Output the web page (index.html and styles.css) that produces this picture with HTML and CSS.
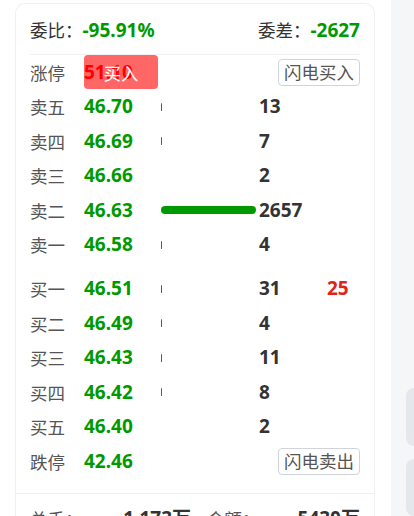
FILE: index.html
```html
<!DOCTYPE html>
<html lang="zh-CN">
<head>
  <meta charset="UTF-8" />
  <meta name="viewport" content="width=device-width, initial-scale=1.0" />
  <title>盘口</title>
  <link rel="stylesheet" href="styles.css">
</head>
<body>
  <div class="main">
    <div class="card">
      <div class="ratio">
        <div><span class="label">委比：</span><b class="num down">-95.91%</b></div>
        <div><span class="label">委差：</span><b class="num down">-2627</b></div>
      </div>

      <div class="book">
        <div class="row">
          <span class="label">涨停</span>
          <span class="num limit-up">51.10<button class="buy">买入</button></span>
          <button class="flash">闪电买入</button>
        </div>
        <div class="row">
          <span class="label">卖五</span><b class="num down">46.70</b>
          <span class="bar-cell"><i class="bar" style="width:1px"></i></span><b class="num vol">13</b>
        </div>
        <div class="row">
          <span class="label">卖四</span><b class="num down">46.69</b>
          <span class="bar-cell"><i class="bar" style="width:1px"></i></span><b class="num vol">7</b>
        </div>
        <div class="row">
          <span class="label">卖三</span><b class="num down">46.66</b>
          <span class="bar-cell"><i class="bar" style="width:0"></i></span><b class="num vol">2</b>
        </div>
        <div class="row">
          <span class="label">卖二</span><b class="num down">46.63</b>
          <span class="bar-cell"><i class="bar" style="width:95px"></i></span><b class="num vol">2657</b>
        </div>
        <div class="row">
          <span class="label">卖一</span><b class="num down">46.58</b>
          <span class="bar-cell"><i class="bar" style="width:1px"></i></span><b class="num vol">4</b>
        </div>

        <div class="gap"></div>

        <div class="row">
          <span class="label">买一</span><b class="num down">46.51</b>
          <span class="bar-cell"><i class="bar" style="width:1px"></i></span><b class="num vol">31</b>
          <b class="num extra">25</b>
        </div>
        <div class="row">
          <span class="label">买二</span><b class="num down">46.49</b>
          <span class="bar-cell"><i class="bar" style="width:1px"></i></span><b class="num vol">4</b>
        </div>
        <div class="row">
          <span class="label">买三</span><b class="num down">46.43</b>
          <span class="bar-cell"><i class="bar" style="width:1px"></i></span><b class="num vol">11</b>
        </div>
        <div class="row">
          <span class="label">买四</span><b class="num down">46.42</b>
          <span class="bar-cell"><i class="bar" style="width:1px"></i></span><b class="num vol">8</b>
        </div>
        <div class="row">
          <span class="label">买五</span><b class="num down">46.40</b>
          <span class="bar-cell"><i class="bar" style="width:0"></i></span><b class="num vol">2</b>
        </div>
        <div class="row">
          <span class="label">跌停</span><b class="num down">42.46</b>
          <button class="flash">闪电卖出</button>
        </div>
      </div>

      <div class="stats">
        <div class="stat"><span class="label">总手：</span><b class="num">1.173万</b></div>
        <div class="stat"><span class="label">金额：</span><b class="num">5430万</b></div>
      </div>
    </div>
  </div>

  <div class="side">
    <div class="block"></div>
    <div class="block"></div>
  </div>
</body>
</html>
```

FILE: styles.css
```css
body {
  margin: 0;
  display: flex;
  height: 516px;
  overflow: hidden;
  font-family: 'Noto Sans', 'Noto Sans CJK SC', sans-serif;
  font-size: 17.5px;
  color: #333;
  background: white;
}
.main {
  flex: 1;
}
.side {
  width: 23px;
  background: #f5f6f8;
  padding-top: 388px;
  display: flex;
  flex-direction: column;
  gap: 13px;
}
.block {
  margin-left: 15px;
  height: 77px;
  border-radius: 8px 0 0 8px;
  background: #e4e7eb;
}
.card {
  margin: 3px 16px 0 15px;
  border: 1px solid #eef0f2;
  border-bottom: none;
  border-radius: 10px 10px 0 0;
  height: 600px;
}
.ratio {
  margin: 0 14px;
  height: 50px;
  display: flex;
  justify-content: space-between;
  align-items: center;
  border-bottom: 1px solid #eef0f2;
}
.label {
  color: #555;
}
.ratio .label {
  color: #333;
}
.num {
  font-size: 19px;
  font-weight: bold;
  line-height: 1;
}
.down {
  color: #009a00;
}
.book {
  padding: 0 14px 14.5px;
}
.gap {
  height: 9.5px;
}
.row {
  height: 34.5px;
  display: grid;
  grid-template-columns: 54px 77px 98px 68px 1fr;
  align-items: center;
}
.limit-up {
  position: relative;
  color: #ff0000;
  align-self: stretch;
  display: flex;
  align-items: center;
}
.buy {
  position: absolute;
  left: 0;
  top: 0;
  width: 74px;
  height: 34px;
  border: none;
  border-radius: 4px;
  background: rgba(255, 0, 0, 0.6);
  color: white;
  font-family: inherit;
  font-size: 17.5px;
  font-weight: normal;
  padding: 0;
}
.flash {
  grid-column: 3 / -1;
  justify-self: end;
  height: 27px;
  padding: 0 5px;
  border: 1px solid #cfd4dc;
  border-radius: 4px;
  background: white;
  color: #555;
  font: inherit;
  line-height: 1;
}
.bar-cell {
  display: flex;
  align-items: center;
}
.bar {
  display: block;
  height: 8px;
  border-radius: 4px;
  background: #009a00;
}
.vol {
  color: #333;
}
.extra {
  color: #e0241a;
}
.stats {
  border-top: 1px solid #eef0f2;
  padding: 12px 14px 0;
  display: grid;
  grid-template-columns: 161px 1fr;
  gap: 16px;
}
.stat {
  display: flex;
  justify-content: space-between;
  align-items: center;
}
.stat .num {
  color: #333;
}
```
